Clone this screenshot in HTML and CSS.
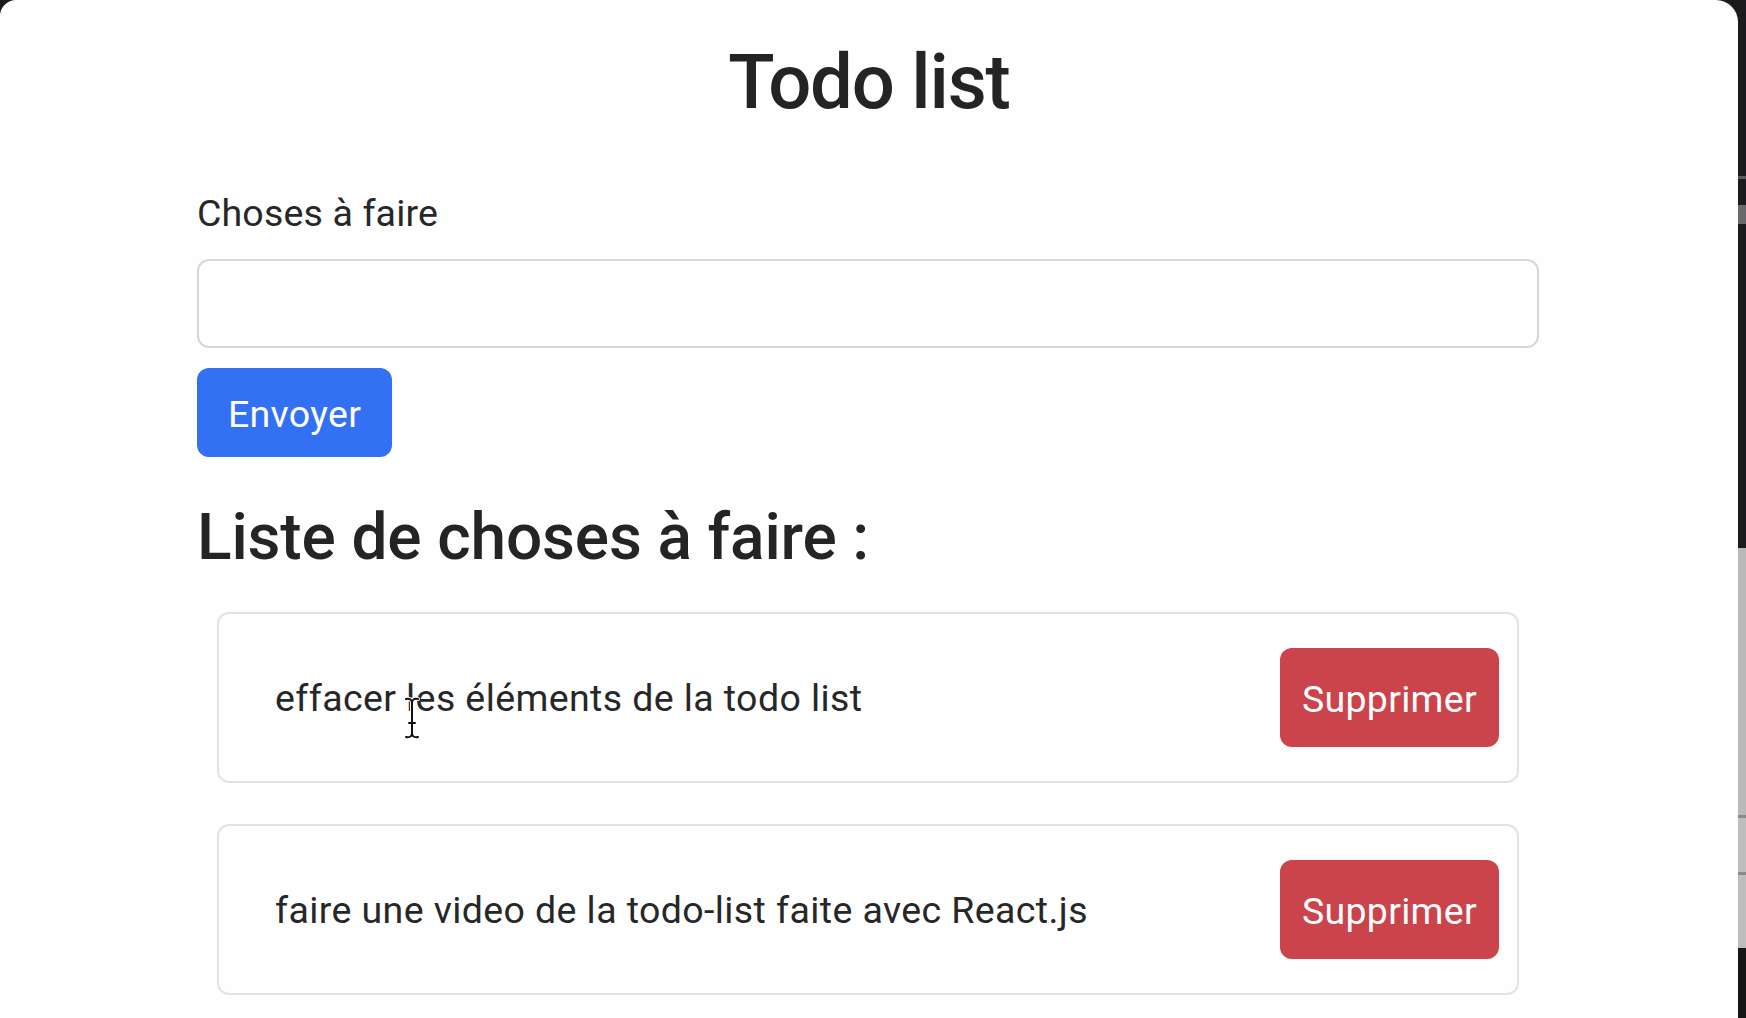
FILE: index.html
```html
<!DOCTYPE html>
<html lang="fr">
<head>
<meta charset="utf-8">
<title>Todo list</title>
<link rel="stylesheet" href="styles.css">
</head>
<body>
<div class="screen">
  <main class="window">
    <h1 class="title">Todo list</h1>
    <div class="container">
      <form class="todo-form">
        <label class="form-label" for="todo">Choses à faire</label>
        <input class="form-control" id="todo" type="text">
        <button class="btn btn-primary" type="button">Envoyer</button>
      </form>
      <h2 class="list-title">Liste de choses à faire :</h2>
      <ul class="todo-list">
        <li class="todo-item">
          <span class="todo-text">effacer les éléments de la todo list</span>
          <button class="btn btn-danger" type="button">Supprimer</button>
          <svg class="cursor" width="18" height="44" viewBox="0 0 18 44" aria-hidden="true">
            <g fill="none" stroke-linecap="round">
              <path d="M3 3 Q9 2 9 7 Q9 2 15 3 M9 7 V37 M3 41 Q9 42 9 37 Q9 42 15 41 M6 27 H12" stroke="#fff" stroke-width="4"/>
              <path d="M3 3 Q9 2 9 7 Q9 2 15 3 M9 7 V37 M3 41 Q9 42 9 37 Q9 42 15 41 M6 27 H12" stroke="#111" stroke-width="2"/>
            </g>
          </svg>
        </li>
        <li class="todo-item">
          <span class="todo-text">faire une video de la todo-list faite avec React.js</span>
          <button class="btn btn-danger" type="button">Supprimer</button>
        </li>
      </ul>
    </div>
  </main>
  <div class="side-strip"></div>
</div>
</body>
</html>
```
FILE: styles.css
```css
html, body {
  margin: 0;
  padding: 0;
  height: 1018px;
  overflow: hidden;
  background: #1b1b1d;
}

.screen {
  display: flex;
  height: 1018px;
}

.window {
  width: 1738px;
  height: 1018px;
  background: #fefefe;
  border-radius: 16px 22px 0 0;
  color: #262728;
  font-family: Roboto, "Liberation Sans", Arial, sans-serif;
  overflow: hidden;
  padding-top: 36px;
  box-sizing: border-box;
}

.side-strip {
  width: 8px;
  height: 1018px;
  background:
    linear-gradient(to bottom,
      #1c1c1f 0, #1c1c1f 176px, #5a5a5c 176px, #5a5a5c 179px,
      #1c1c1f 179px, #1c1c1f 205px, #6a6a6c 205px, #6a6a6c 224px,
      #1c1c1f 224px, #1c1c1f 548px,
      #b9b9b9 548px, #b9b9b9 815px, #8a8a8a 815px, #8a8a8a 818px,
      #bdbdbd 818px, #bdbdbd 872px, #8a8a8a 872px, #8a8a8a 875px,
      #bdbdbd 875px, #bdbdbd 948px,
      #161617 948px, #161617 1018px);
}

.title {
  margin: 0;
  text-align: center;
  font-size: 76px;
  line-height: 92px;
  font-weight: 500;
  letter-spacing: -1.2px;
  color: #232425;
}

.container {
  padding: 0 199px 0 197px;
}

.todo-form {
  display: flex;
  flex-direction: column;
  align-items: flex-start;
  margin-top: 57px;
}

.form-label {
  font-size: 37.5px;
  line-height: 56px;
  letter-spacing: 0.15px;
  margin-bottom: 18px;
}

.form-control {
  width: 100%;
  height: 89px;
  box-sizing: border-box;
  border: 2px solid #d7d7d8;
  border-radius: 12px;
  background: #fefefe;
  font-family: inherit;
  font-size: 37.5px;
  padding: 0 28px;
  margin: 0 0 20px 0;
}

.btn {
  display: inline-flex;
  align-items: center;
  justify-content: center;
  box-sizing: border-box;
  border: none;
  border-radius: 12px;
  color: #fff;
  font-family: Roboto, "Liberation Sans", Arial, sans-serif;
  font-size: 37.5px;
  line-height: 56px;
  letter-spacing: 0.3px;
  padding-top: 3px;
  cursor: pointer;
}

.btn-primary {
  height: 89px;
  padding-left: 31px;
  padding-right: 31px;
  background: #3270f4;
}

.list-title {
  margin: 42px 0 0 0;
  font-size: 64px;
  line-height: 77px;
  font-weight: 500;
  letter-spacing: -0.15px;
  color: #232425;
}

.todo-list {
  list-style: none;
  margin: 36px 20px 0 20px;
  padding: 0;
  display: flex;
  flex-direction: column;
  gap: 41px;
}

.todo-item {
  position: relative;
  height: 171px;
  box-sizing: border-box;
  border: 2px solid #e3e3e4;
  border-radius: 12px;
  display: flex;
  align-items: center;
  justify-content: space-between;
  padding: 0 18px 0 56px;
}

.todo-text {
  font-size: 37.5px;
  line-height: 56px;
  letter-spacing: 0.4px;
}

.btn-danger {
  height: 99px;
  padding-left: 22px;
  padding-right: 22px;
  background: #cb434b;
}

.cursor {
  position: absolute;
  left: 184px;
  top: 82px;
}
```
